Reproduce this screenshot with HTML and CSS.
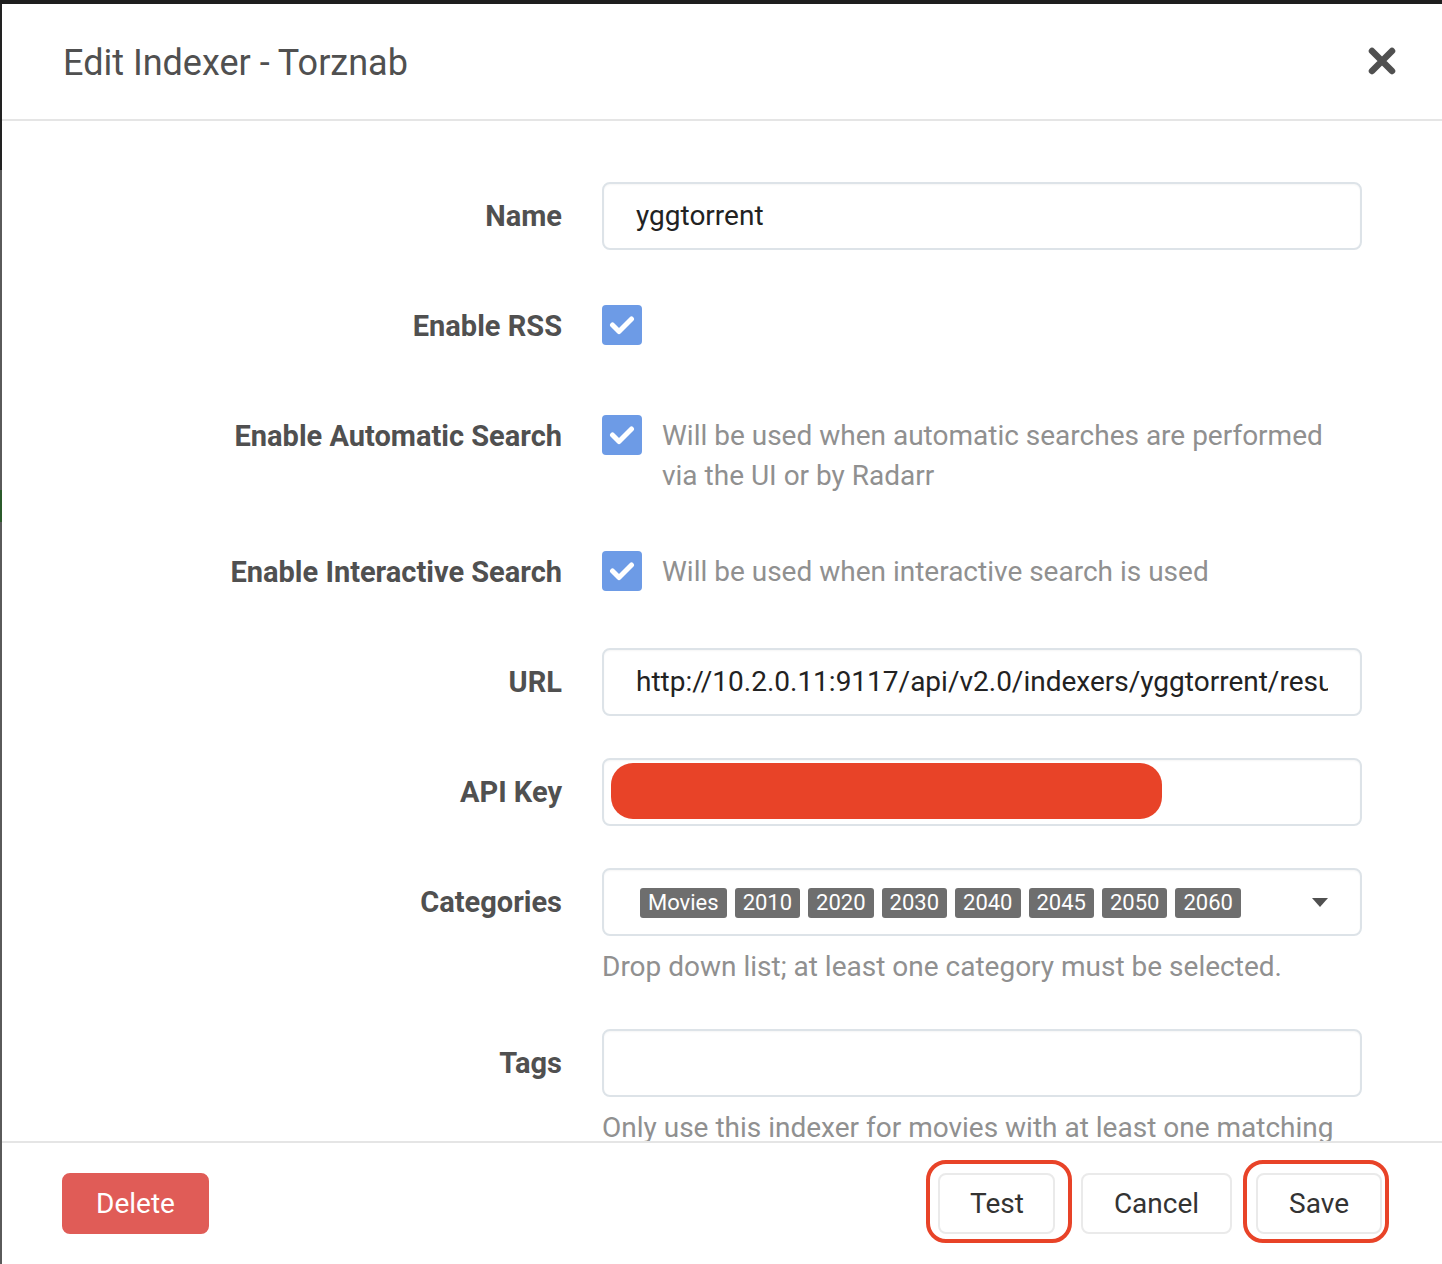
FILE: index.html
```html
<!DOCTYPE html>
<html>
<head>
<meta charset="utf-8">
<link rel="stylesheet" href="styles.css">
</head>
<body>
<div class="page">
  <div class="edge">
    <div class="edge-dark"></div>
    <div class="edge-gray"></div>
    <div class="edge-green"></div>
    <div class="edge-gray2"></div>
  </div>
  <div class="modal">
    <div class="modal-header">
      <h1 class="title">Edit Indexer - Torznab</h1>
      <svg class="close" width="28" height="28" viewBox="0 0 28 28"><path d="M4 4 L24 24 M24 4 L4 24" stroke="#505050" stroke-width="6.5" stroke-linecap="round"/></svg>
    </div>
    <div class="modal-body">
      <div class="row">
        <label class="label">Name</label>
        <div class="field"><div class="input"><span class="value">yggtorrent</span></div></div>
      </div>
      <div class="row">
        <label class="label">Enable RSS</label>
        <div class="field check-field">
          <span class="checkbox"><svg width="26" height="20" viewBox="0 0 26 20"><path d="M3.5 10 L10 16.5 L22.5 4" fill="none" stroke="#fff" stroke-width="5" stroke-linecap="round" stroke-linejoin="round"/></svg></span>
        </div>
      </div>
      <div class="row">
        <label class="label">Enable Automatic Search</label>
        <div class="field check-field">
          <span class="checkbox"><svg width="26" height="20" viewBox="0 0 26 20"><path d="M3.5 10 L10 16.5 L22.5 4" fill="none" stroke="#fff" stroke-width="5" stroke-linecap="round" stroke-linejoin="round"/></svg></span>
          <span class="check-help">Will be used when automatic searches are performed via the UI or by Radarr</span>
        </div>
      </div>
      <div class="row">
        <label class="label">Enable Interactive Search</label>
        <div class="field check-field">
          <span class="checkbox"><svg width="26" height="20" viewBox="0 0 26 20"><path d="M3.5 10 L10 16.5 L22.5 4" fill="none" stroke="#fff" stroke-width="5" stroke-linecap="round" stroke-linejoin="round"/></svg></span>
          <span class="check-help">Will be used when interactive search is used</span>
        </div>
      </div>
      <div class="row">
        <label class="label">URL</label>
        <div class="field"><div class="input"><span class="value clip">http://10.2.0.11:9117/api/v2.0/indexers/yggtorrent/results/torznab/</span></div></div>
      </div>
      <div class="row">
        <label class="label">API Key</label>
        <div class="field"><div class="input input-redact"><span class="redact"></span></div></div>
      </div>
      <div class="row">
        <label class="label">Categories</label>
        <div class="field">
          <div class="input select">
            <div class="tags">
              <span class="tag">Movies</span><span class="tag">2010</span><span class="tag">2020</span><span class="tag">2030</span><span class="tag">2040</span><span class="tag">2045</span><span class="tag">2050</span><span class="tag">2060</span>
            </div>
            <span class="caret"></span>
          </div>
          <div class="help">Drop down list; at least one category must be selected.</div>
        </div>
      </div>
      <div class="row">
        <label class="label">Tags</label>
        <div class="field">
          <div class="input"></div>
          <div class="help">Only use this indexer for movies with at least one matching tag. Leave blank to use with all movies.</div>
        </div>
      </div>
    </div>
    <div class="modal-footer">
      <button class="btn btn-danger">Delete</button>
      <div class="footer-right">
        <span class="mark mark-test"><button class="btn btn-test">Test</button></span>
        <button class="btn btn-cancel">Cancel</button>
        <span class="mark mark-save"><button class="btn">Save</button></span>
      </div>
    </div>
  </div>
</div>
</body>
</html>
```

FILE: styles.css
```css
* { box-sizing: border-box; }
html, body {
  margin: 0;
  padding: 0;
  height: 1264px;
  overflow: hidden;
  background: #1e1e1e;
  font-family: Roboto, "Liberation Sans", sans-serif;
}
.page {
  display: flex;
  height: 1264px;
  padding-top: 4px;
}
.edge {
  width: 2px;
  display: flex;
  flex-direction: column;
  flex: none;
}
.edge-dark { height: 166px; background: #222; }
.edge-gray { height: 320px; background: #5a5a5a; }
.edge-green { height: 32px; background: #2b5a2b; }
.edge-gray2 { flex: 1; background: #5a5a5a; }
.modal {
  flex: 1;
  background: #fff;
  display: flex;
  flex-direction: column;
  min-width: 0;
}
.modal-header {
  height: 117px;
  flex: none;
  border-bottom: 2px solid #e5e5e5;
  display: flex;
  align-items: center;
  justify-content: space-between;
  padding: 0 46px 0 61px;
}
.title {
  margin: 0;
  font-size: 36px;
  font-weight: 400;
  color: #505050;
  padding-top: 2px;
}
.close { margin-top: -2px; }
.modal-body {
  flex: 1;
  overflow: hidden;
  padding: 61px 80px 0 60px;
  min-height: 0;
}
.row {
  display: flex;
  align-items: flex-start;
  margin-bottom: 42px;
}
.label {
  width: 500px;
  flex: none;
  text-align: right;
  margin-right: 40px;
  font-size: 29px;
  font-weight: 700;
  color: #505050;
  line-height: 68px;
  height: 68px;
}
.field {
  width: 760px;
}
.input {
  height: 68px;
  border: 2px solid #dde3e8;
  border-radius: 8px;
  padding: 0 32px;
  font-size: 28px;
  line-height: 64px;
  color: #222;
  white-space: nowrap;
  box-shadow: inset 0 1px 2px rgba(0,0,0,0.04);
}
.value { display: block; }
.clip { overflow: hidden; }
.input-redact { padding: 3px 7px; }
.redact {
  display: block;
  width: 551px;
  height: 56px;
  background: #e84328;
  border-radius: 22px;
}
.check-field {
  display: flex;
  align-items: flex-start;
  padding-top: 13px;
}
.checkbox {
  width: 40px;
  height: 40px;
  flex: none;
  background: #6d9be6;
  border-radius: 4px;
  display: flex;
  align-items: center;
  justify-content: center;
}
.check-help {
  margin-left: 20px;
  font-size: 28px;
  line-height: 40px;
  color: #909090;
  margin-top: 1px;
}
.select {
  display: flex;
  align-items: center;
  justify-content: space-between;
  padding: 0 32px 0 36px;
}
.tags { display: flex; gap: 8px; margin-top: 1px; }
.tag {
  background: #6e6e6e;
  color: #fff;
  font-size: 22px;
  line-height: 30px;
  height: 30px;
  padding: 0 8px;
  border-radius: 3px;
}
.caret {
  width: 0;
  height: 0;
  border-left: 8px solid transparent;
  border-right: 8px solid transparent;
  border-top: 9px solid #505050;
}
.help {
  margin-top: 11px;
  font-size: 28px;
  line-height: 40px;
  color: #909090;
}
.modal-footer {
  height: 123px;
  flex: none;
  border-top: 2px solid #e5e5e5;
  display: flex;
  justify-content: space-between;
  align-items: flex-start;
  padding: 30px 60px 0 60px;
}
.btn {
  height: 61px;
  padding: 0 31px;
  font-family: Roboto, "Liberation Sans", sans-serif;
  font-size: 28px;
  color: #333;
  background: #fff;
  border: 2px solid #eaeaea;
  border-radius: 8px;
}
.btn-test { padding: 0 29px 0 30px; }
.btn-danger {
  background: #e05c57;
  border-color: #e05c57;
  color: #fff;
  padding: 0 32px;
}
.footer-right {
  display: flex;
  align-items: flex-start;
}
.btn-cancel { margin: 0 24px 0 26px; }
.mark { position: relative; display: block; }
.mark::after {
  content: "";
  position: absolute;
  border: 4px solid #e84328;
  border-radius: 20px;
  pointer-events: none;
}
.mark-test::after { left: -12px; right: -17px; top: -13px; bottom: -9px; }
.mark-save::after { left: -13px; right: -7px; top: -13px; bottom: -9px; }
.mark .btn { display: block; }
```
